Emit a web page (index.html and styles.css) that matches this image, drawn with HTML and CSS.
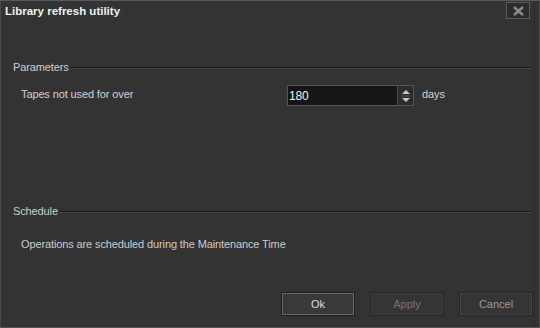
FILE: index.html
```html
<!DOCTYPE html>
<html>
<head>
<meta charset="utf-8">
<link rel="stylesheet" href="styles.css">
</head>
<body>
<div class="dialog">
  <div class="titlebar">
    <span class="title">Library refresh utility</span>
    <button class="close" aria-label="Close">
      <svg width="13" height="10" viewBox="0 0 13 10"><path d="M2 1 L11 9 M11 1 L2 9" stroke="#8a8a8a" stroke-width="2.4" fill="none"/></svg>
    </button>
  </div>
  <div class="content">
    <div class="group params">
      <div class="legend"><span>Parameters</span><i class="rule"></i></div>
      <div class="row">
        <span class="label">Tapes not used for over</span>
        <div class="spin">
          <span class="value">180</span>
          <span class="arrows">
            <svg width="14" height="18" viewBox="0 0 14 18"><path d="M3 7 L7 3 L11 7 Z M3 11 L7 15 L11 11 Z" fill="#c8c8c8"/><path d="M2 9 H12" stroke="#5a5a5a" stroke-width="1"/></svg>
          </span>
        </div>
        <span class="unit">days</span>
      </div>
    </div>
    <div class="group schedule">
      <div class="legend"><span>Schedule</span><i class="rule"></i></div>
      <p class="note">Operations are scheduled during the Maintenance Time</p>
    </div>
  </div>
  <div class="buttons">
    <button class="btn ok">Ok</button>
    <button class="btn disabled">Apply</button>
    <button class="btn cancel">Cancel</button>
  </div>
</div>
</body>
</html>
```
FILE: styles.css
```css
html, body {
  margin: 0;
  padding: 0;
  background: #323232;
}
.dialog {
  width: 540px;
  height: 328px;
  box-sizing: border-box;
  background: #333333;
  border-top: 1px solid #5a5a5a;
  border-left: 1px solid #4a4a4a;
  border-right: 1px solid #4a4a4a;
  border-bottom: 1px solid #555;
  display: flex;
  flex-direction: column;
  font-family: "Liberation Sans", Arial, sans-serif;
  font-size: 11px;
  letter-spacing: -0.12px;
  color: #d2d2d2;
  box-shadow: inset -4px 0 0 #333, inset -5px 0 0 #2a2a2a;
}
.titlebar {
  height: 20px;
  display: flex;
  align-items: flex-start;
  justify-content: space-between;
  padding: 0 9px 0 4px;
}
.title {
  font-weight: bold;
  color: #f0f0f0;
  font-size: 11.5px;
  letter-spacing: 0;
  margin-top: 4px;
}
.close {
  margin-top: 1px;
  width: 24px;
  height: 17px;
  padding: 0;
  background: #2c2c2c;
  border: 1px solid #5c5c5c;
  display: flex;
  align-items: center;
  justify-content: center;
}
.content {
  flex: 1;
  display: flex;
  flex-direction: column;
  padding: 40px 6px 0 12px;
}
.legend {
  display: flex;
  align-items: center;
  gap: 1px;
  color: #cfcfcf;
}
.rule {
  flex: 1;
  height: 1px;
  background: #1c1c1c;
  border-bottom: 1px solid #444;
  margin-top: 2px;
}
.params {
  height: 144px;
}
.row {
  display: flex;
  align-items: center;
  margin-top: 12px;
  padding-left: 8px;
}
.label {
  width: 266px;
  margin-top: -4px;
}
.spin {
  width: 125px;
  height: 19px;
  background: #151515;
  border: 1px solid #555;
  display: flex;
  align-items: center;
  justify-content: space-between;
}
.value {
  color: #f2f2f2;
  padding-left: 1px;
  font-size: 12px;
}
.arrows {
  width: 15px;
  height: 19px;
  background: #2c2c2c;
  border-left: 1px solid #4a4a4a;
  display: flex;
  align-items: center;
  justify-content: center;
}
.unit {
  margin-left: 8px;
  margin-top: -4px;
}
.note {
  margin: 21px 0 0 8px;
  color: #cccccc;
}
.buttons {
  display: flex;
  justify-content: flex-end;
  gap: 15px;
  padding: 0 6px 11px 0;
}
.btn {
  width: 74px;
  height: 24px;
  font-family: "Liberation Sans", Arial, sans-serif;
  font-size: 11px;
  background: #353535;
  border: 1px solid #262626;
  box-shadow: inset 0 0 0 1px #444;
  color: #9a9a9a;
}
.btn.ok {
  background: #393939;
  border: 1px solid #1e1e1e;
  box-shadow: inset 0 0 0 1px #6a6a6a;
  color: #dedede;
}
.btn.disabled {
  color: #777;
  box-shadow: inset 0 0 0 1px #3c3c3c;
}
```
